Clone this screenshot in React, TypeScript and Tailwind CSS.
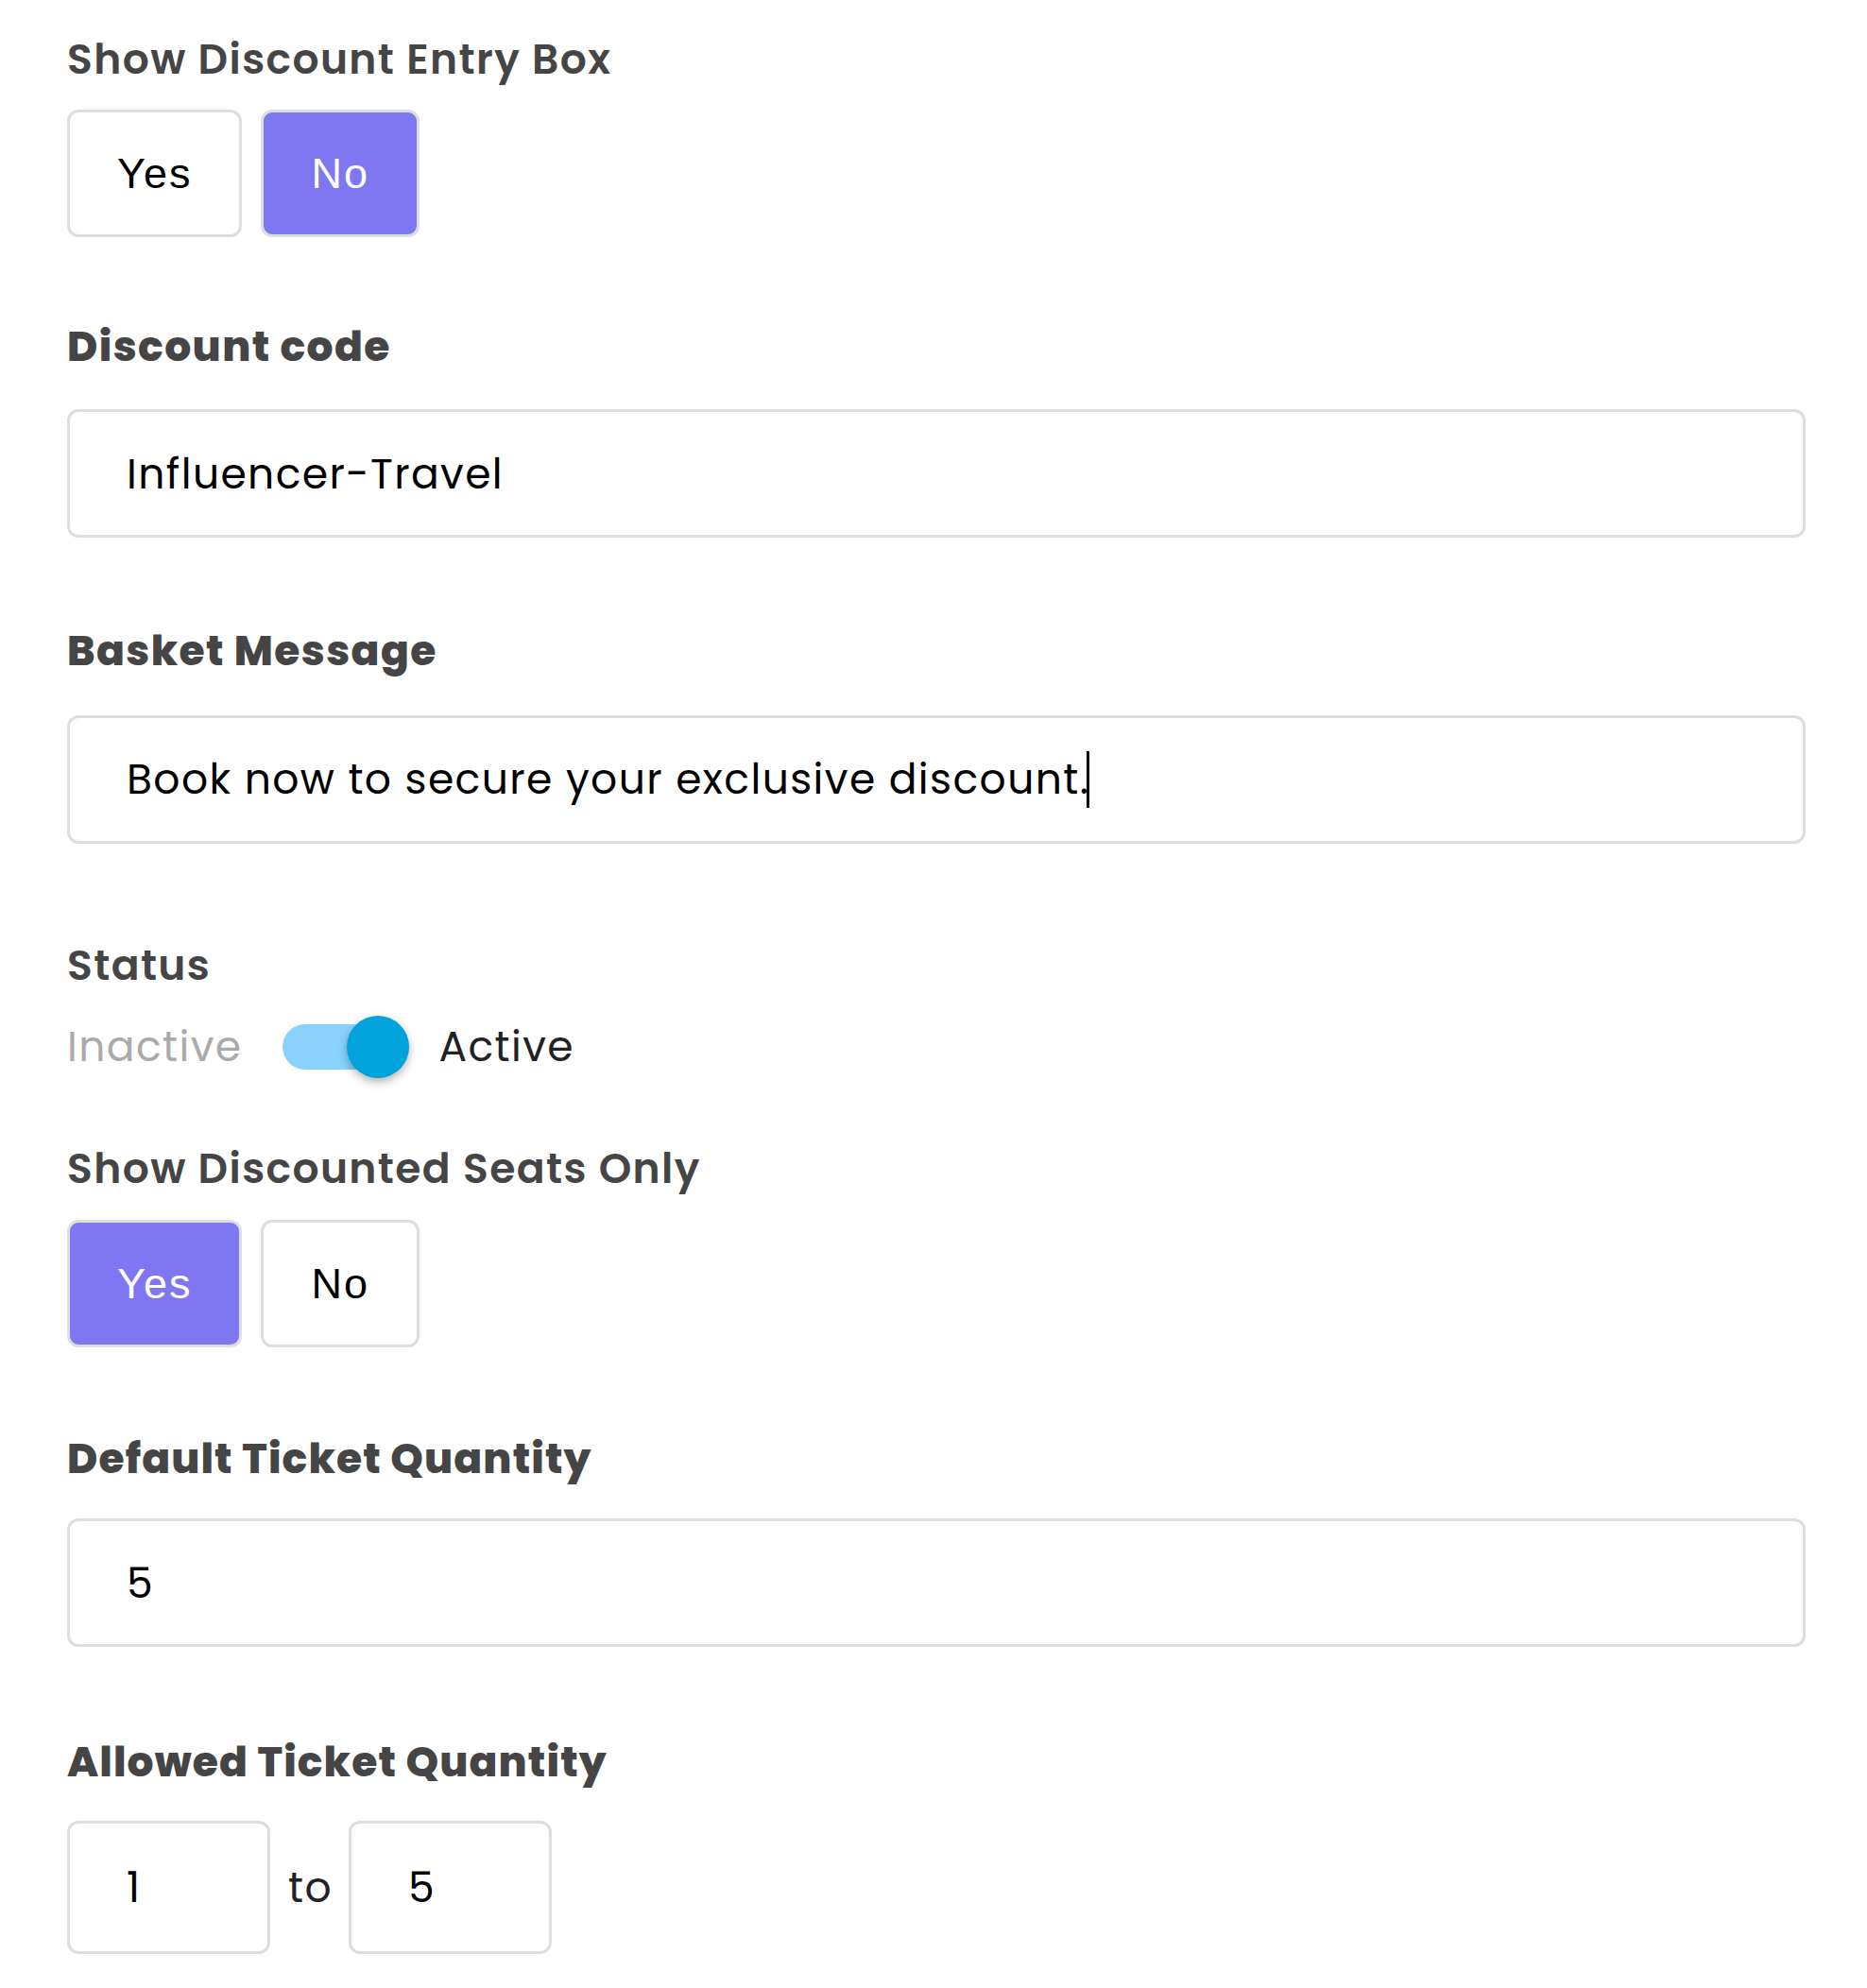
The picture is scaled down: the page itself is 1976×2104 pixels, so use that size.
import { useState } from 'react'

const labelBase = 'text-[44px] leading-[44px] text-[#454545]'
const font = { fontFamily: 'Poppins, Inter, "Noto Sans", sans-serif' }

interface ChoiceProps {
  value: boolean
  onChange: (v: boolean) => void
}

// 是/否 切换按钮
function YesNo({ value, onChange }: ChoiceProps) {
  const base =
    'h-[135px] px-[50px] rounded-[12px] border-[3px] border-[#dedede] text-[45px] tracking-[2px] font-["Liberation_Sans",Arial,sans-serif]'
  return (
    <div className="flex gap-[20px]">
      <button
        className={`${base} ${value ? 'bg-[#7f77f1] text-white' : 'bg-white text-black'}`}
        onClick={() => onChange(true)}>
        Yes
      </button>
      <button
        className={`${base} ${!value ? 'bg-[#7f77f1] text-white' : 'bg-white text-black'}`}
        onClick={() => onChange(false)}>
        No
      </button>
    </div>
  )
}

function TextBox({ value, className = '' }: { value: string; className?: string }) {
  return (
    <input
      readOnly
      defaultValue={value}
      style={font}
      className={`h-[136px] pl-[60px] rounded-[12px] border-[3px] border-[#dedede] bg-white text-[44px] tracking-[1.4px] text-black outline-none ${className}`}
    />
  )
}

export default function App() {
  const [showEntry, setShowEntry] = useState(false)
  const [active, setActive] = useState(true)
  const [seatsOnly, setSeatsOnly] = useState(true)

  return (
    <div className="min-h-screen bg-white px-[71px] pr-[65px] pt-[41px] pb-[30px] tracking-[1.4px]" style={font}>
      <div className={`${labelBase} font-semibold`}>Show Discount Entry Box</div>
      <div className="mt-[31px]">
        <YesNo value={showEntry} onChange={setShowEntry} />
      </div>

      <div className={`${labelBase} font-extrabold mt-[94px]`}>Discount code</div>
      <TextBox value="Influencer-Travel" className="mt-[44px] w-full" />

      <div className={`${labelBase} font-extrabold mt-[98px]`}>Basket Message</div>
      <div className="mt-[46px] h-[136px] pl-[60px] flex items-center rounded-[12px] border-[3px] border-[#dedede] bg-white text-[44px] text-black">
        <span>Book now to secure your exclusive discount.</span>
        <span className="inline-block w-[3px] h-[60px] bg-black -ml-[3px]" />
      </div>

      <div className={`${labelBase} font-semibold mt-[107px]`}>Status</div>
      <div className="mt-[31px] h-[66px] flex items-center text-[44px]">
        <span className="text-[#aaaaaa]">Inactive</span>
        <button
          className="relative ml-[43px] w-[134px] h-[48px] rounded-full bg-[#8ad2fb]"
          onClick={() => setActive(!active)}>
          <span
            className={`absolute top-1/2 -translate-y-1/2 w-[66px] h-[66px] rounded-full bg-[#02a3dd] shadow-[0_4px_10px_rgba(0,0,0,0.3)] ${active ? 'right-0' : 'left-0'}`}
          />
        </button>
        <span className="ml-[31px] text-[#222222]">Active</span>
      </div>

      <div className={`${labelBase} font-semibold mt-[74px]`}>Show Discounted Seats Only</div>
      <div className="mt-[32px]">
        <YesNo value={seatsOnly} onChange={setSeatsOnly} />
      </div>

      <div className={`${labelBase} font-extrabold tracking-[1.1px] mt-[96px]`}>Default Ticket Quantity</div>
      <TextBox value="5" className="mt-[41px] w-full" />

      <div className={`${labelBase} font-extrabold tracking-[1.1px] mt-[100px]`}>Allowed Ticket Quantity</div>
      <div className="mt-[40px] flex items-center">
        <TextBox value="1" className="w-[215px] h-[141px]" />
        <span className="ml-[19px] mr-[17px] text-[44px] text-[#222222]">to</span>
        <TextBox value="5" className="w-[215px] h-[141px]" />
      </div>
    </div>
  )
}
